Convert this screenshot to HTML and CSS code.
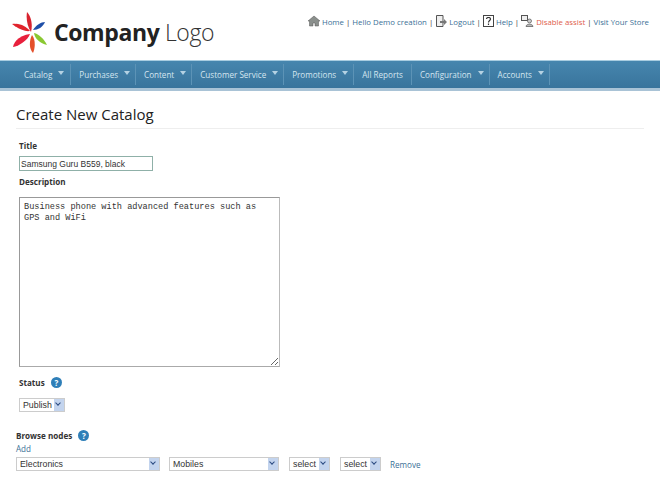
FILE: index.html
```html
<!DOCTYPE html>
<html lang="en">

<head>
    <meta charset="UTF-8">
    <title>Create New Catalog</title>
    <link rel="stylesheet" href="styles.css">
</head>

<body>

    <header class="top">
        <div class="logo">
            <svg class="logo-mark" width="40" height="42" viewBox="0 0 40 42">
                <path d="M20 20 C16 14 15 6 16 0 C20 4 22 13 20 20Z" fill="#d8232f"/>
                <path d="M22 18 C25 13 30 10 34 10 C32 15 27 18 22 18Z" fill="#1f4fa8"/>
                <path d="M23 21 C28 22 33 27 36 33 C29 31 24 27 23 21Z" fill="#8ac832"/>
                <path d="M21 23 C25 28 24 37 22 41 C18 37 18 29 21 23Z" fill="#e4502a"/>
                <path d="M19 22 C16 29 8 34 2 35 C3 28 11 23 19 22Z" fill="#e8203c"/>
                <path d="M19 19 C13 20 6 16 1 12 C8 11 15 14 19 19Z" fill="#e0232c"/>
            </svg>
            <span class="logo-text"><b>Company</b> Logo</span>
        </div>
        <nav class="util">
            <svg class="util-icon" width="12" height="12" viewBox="0 0 12 12">
                <path d="M0 6 L6 1 L12 6 L10.5 6 L10.5 11 L7 11 L7 8 L5 8 L5 11 L1.5 11 L1.5 6Z" fill="#8a8f8c" stroke="#555" stroke-width="0.5"/>
            </svg>
            <a href="#">Home</a> |
            <a href="#">Hello Demo creation</a> |
            <svg class="util-icon" width="12" height="12" viewBox="0 0 12 12">
                <path d="M1.5 .5 H8 V11.5 H1.5Z" fill="#eee" stroke="#555"/>
                <path d="M5 6 H9 V4 L12 7 L9 10 V8 H5Z" fill="#777"/>
            </svg>
            <a href="#">Logout</a> |
            <svg class="util-icon" width="11" height="12" viewBox="0 0 11 12">
                <rect x=".5" y=".5" width="10" height="11" fill="#fff" stroke="#444"/>
                <path d="M3.5 4 C3.5 2 7.5 2 7.5 4 C7.5 5.5 5.5 5.5 5.5 7.5 M5.5 8.5 V10" fill="none" stroke="#333" stroke-width="1.2"/>
            </svg>
            <a href="#">Help</a> |
            <svg class="util-icon" width="13" height="12" viewBox="0 0 13 12">
                <rect x=".5" y=".5" width="6" height="5" fill="#eee" stroke="#555"/>
                <circle cx="8.5" cy="6" r="2" fill="#ccc" stroke="#555" stroke-width=".7"/>
                <path d="M5 11.5 C5 8.5 12 8.5 12 11.5Z" fill="#bbb" stroke="#555" stroke-width=".7"/>
            </svg>
            <a href="#" class="warn">Disable assist</a> |
            <a href="#">Visit Your Store</a>
        </nav>
    </header>

    <nav class="menu">
        <a href="#" class="menu-item drop">Catalog</a>
        <a href="#" class="menu-item drop">Purchases</a>
        <a href="#" class="menu-item drop">Content</a>
        <a href="#" class="menu-item drop">Customer Service</a>
        <a href="#" class="menu-item drop">Promotions</a>
        <a href="#" class="menu-item">All Reports</a>
        <a href="#" class="menu-item drop">Configuration</a>
        <a href="#" class="menu-item drop">Accounts</a>
    </nav>

    <main class="content">
        <h1>Create New Catalog</h1>

        <form class="catalog-form">
            <label class="field-label" for="title">Title</label>
            <input class="title-input" type="text" id="title" value="Samsung Guru B559, black">

            <label class="field-label desc-label" for="description">Description</label>
            <textarea class="desc-input" id="description">Business phone with advanced features such as GPS and WiFi</textarea>

            <div class="field-label status-label">Status <span class="help">?</span></div>
            <div class="pick pick-status">
                <span class="pick-value">Publish</span>
                <span class="pick-arrow"></span>
            </div>

            <div class="browse">
                <div class="field-label">Browse nodes <span class="help">?</span></div>
                <a href="#" class="add-link">Add</a>
                <div class="browse-row">
                    <div class="pick pick-wide">
                        <span class="pick-value">Electronics</span>
                        <span class="pick-arrow"></span>
                    </div>
                    <div class="pick pick-mid">
                        <span class="pick-value">Mobiles</span>
                        <span class="pick-arrow"></span>
                    </div>
                    <div class="pick pick-small">
                        <span class="pick-value">select</span>
                        <span class="pick-arrow"></span>
                    </div>
                    <div class="pick pick-small">
                        <span class="pick-value">select</span>
                        <span class="pick-arrow"></span>
                    </div>
                    <a href="#" class="remove-link">Remove</a>
                </div>
            </div>
        </form>
    </main>

</body>

</html>
```

FILE: styles.css
```css
html,
body {
    height: 477px;
    overflow: hidden;
}

body {
    margin: 0;
    background-color: #fff;
    font-family: "Open Sans", sans-serif;
    font-size: 8.1px;
    color: #333;
}

a {
    text-decoration: none;
    color: #3a6f96;
}

.top {
    display: flex;
    justify-content: space-between;
    height: 60px;
}

.logo {
    display: flex;
    align-items: flex-start;
    padding: 12px 0 0 11px;
}

.logo-text {
    margin: 3px 0 0 3px;
    font-family: "Open Sans", sans-serif;
    font-size: 23px;
    line-height: 34px;
    font-weight: 300;
    color: #333;
    letter-spacing: -0.4px;
}

.logo-text b {
    font-weight: 700;
    color: #222;
}

.util {
    padding: 15px 11px 0 0;
    font-size: 7.8px;
    line-height: 13px;
    color: #333;
    white-space: nowrap;
}

.util-icon {
    vertical-align: -2px;
}

.util .warn {
    color: #e0604a;
}

.menu {
    display: flex;
    height: 27px;
    padding-left: 16px;
    background: linear-gradient(#4686ae, #39749c);
    border-top: 1px solid #a9cde0;
    border-bottom: 3px solid #a9c3d6;
}

.menu-item {
    display: flex;
    align-items: center;
    margin: 3px 0;
    padding: 0 8px;
    border-right: 1px solid #5c93b6;
    color: #d5e6f0;
    white-space: nowrap;
}

.menu-item.drop {
    padding-right: 5px;
}

.menu-item.drop:first-child {
    padding-right: 6px;
}

.menu-item.drop::after {
    content: "";
    margin-left: 6px;
    margin-top: -3px;
    border: 3px solid transparent;
    border-top: 4px solid #b5d2e3;
    border-bottom: 0;
}

.content {
    padding: 0 16px;
}

h1 {
    margin: 14px 0 0;
    padding-bottom: 5px;
    border-bottom: 1px solid #eee;
    font-size: 15px;
    line-height: 18px;
    font-weight: normal;
    color: #222;
}

.catalog-form {
    padding-left: 3px;
}

.field-label {
    display: block;
    font-weight: bold;
    line-height: 12px;
    color: #333;
}

.catalog-form > .field-label:first-child {
    margin-top: 11px;
}

.title-input {
    display: block;
    box-sizing: border-box;
    width: 134px;
    height: 15px;
    margin: 4px 0 0;
    padding: 0 1px;
    border: 1px solid #8fb0a8;
    font-family: "Liberation Sans", sans-serif;
    font-size: 8.5px;
    color: #333;
}

.desc-label {
    margin-top: 5px;
}

.desc-input {
    display: block;
    box-sizing: border-box;
    width: 261px;
    height: 170px;
    margin: 9px 0 0;
    padding: 4px;
    border: 1px solid #999;
    border-right-color: #bbb;
    border-bottom-color: #aaa;
    font-family: "Liberation Mono", monospace;
    font-size: 8.6px;
    line-height: 11px;
    color: #333;
}

.status-label {
    margin-top: 10px;
}

.help {
    display: inline-block;
    width: 11px;
    height: 11px;
    margin-left: 4px;
    border-radius: 50%;
    background-color: #2f7fb8;
    color: #fff;
    font-size: 8px;
    line-height: 11px;
    text-align: center;
}

.pick {
    display: flex;
    align-items: stretch;
    box-sizing: border-box;
    height: 14px;
    border: 1px solid #ccc;
    font-family: "Liberation Sans", sans-serif;
    font-size: 8.8px;
    line-height: 12px;
    color: #333;
}

.pick-value {
    flex: 1;
    padding-left: 3px;
}

.pick-arrow {
    position: relative;
    width: 10px;
    background-color: #c3d4ee;
}

.pick-arrow::after {
    content: "";
    position: absolute;
    left: 2px;
    top: 2px;
    width: 3px;
    height: 3px;
    border-right: 1.5px solid #2a4a80;
    border-bottom: 1.5px solid #2a4a80;
    transform: rotate(45deg);
}

.pick-status {
    width: 46px;
    margin-top: 9px;
}

.browse {
    margin: 18px 0 0 -3px;
}

.add-link {
    display: block;
    margin-top: 1px;
    line-height: 11px;
}

.browse-row {
    display: flex;
    align-items: center;
    margin-top: 3px;
}

.pick-wide {
    width: 144px;
    margin-right: 9px;
}

.pick-mid {
    width: 110px;
    margin-right: 10px;
}

.pick-small {
    width: 41px;
    margin-right: 10px;
}

.remove-link {
    margin-left: -1px;
}
```
